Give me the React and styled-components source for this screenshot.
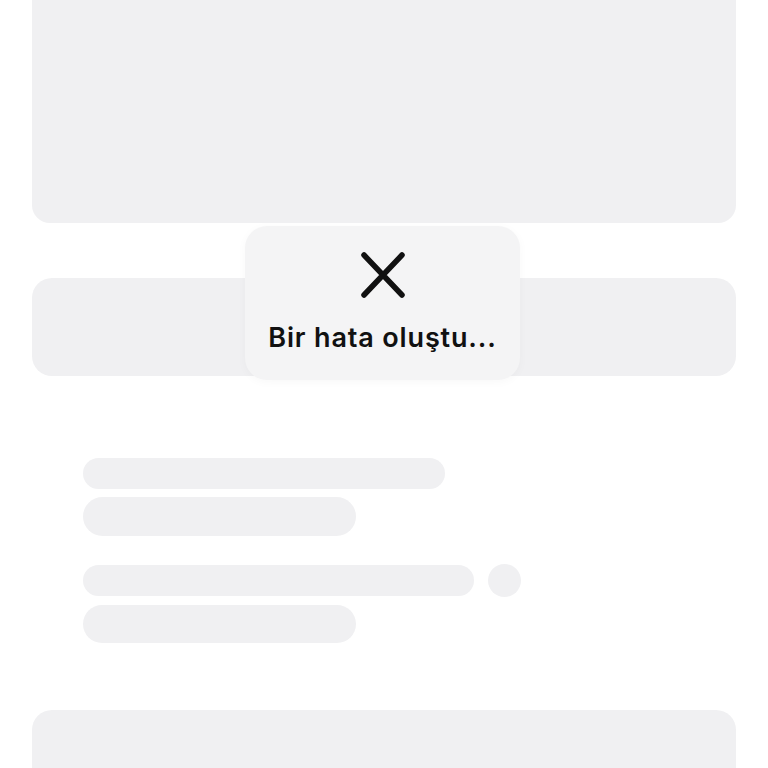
import React from 'react';
import styled, { createGlobalStyle } from 'styled-components';

const GlobalStyle = createGlobalStyle`
  html, body {
    margin: 0;
    padding: 0;
    background: #ffffff;
    font-family: Inter, "Noto Sans", "Liberation Sans", sans-serif;
    overflow: hidden;
  }
`;

const Page = styled.div`
  position: relative;
  width: 768px;
  height: 768px;
  overflow: hidden;
  padding: 0 32px;
  box-sizing: border-box;
  display: flex;
  flex-direction: column;
`;

const Card = styled.div`
  flex-shrink: 0;
  background: #f0f0f2;
  border-radius: ${(p) => p.$radius || 20}px;
  height: ${(p) => p.$height}px;
  margin-top: ${(p) => p.$offset || 0}px;
`;

const SkeletonGroup = styled.div`
  display: flex;
  flex-direction: column;
  gap: 8px;
  padding: 0 51px;
  margin-top: ${(p) => p.$offset}px;
`;

const Row = styled.div`
  display: flex;
  align-items: center;
  gap: 14px;
`;

const Bar = styled.div`
  background: #f0f0f2;
  border-radius: 999px;
  width: ${(p) => p.$width}px;
  height: ${(p) => p.$height}px;
`;

const Dot = styled.div`
  background: #f0f0f2;
  border-radius: 50%;
  width: 33px;
  height: 33px;
`;

const Toast = styled.div`
  position: absolute;
  left: 245px;
  top: 226px;
  width: 275px;
  height: 154px;
  box-sizing: border-box;
  background: #f4f4f5;
  border-radius: 22px;
  box-shadow: 0 2px 10px rgba(0, 0, 0, 0.03);
  display: flex;
  flex-direction: column;
  align-items: center;
  padding-top: 25px;
  gap: 23px;
`;

const Message = styled.div`
  font-size: 27px;
  font-weight: 600;
  color: #111111;
  letter-spacing: 0.85px;
  line-height: 32px;
`;

const App = () => (
  <>
    <GlobalStyle />
    <Page>
      <Card $height={243} $offset={-20} $radius={18} />
      <Card $height={98} $offset={55} />
      <SkeletonGroup $offset={82}>
        <Bar $width={362} $height={31} />
        <Bar $width={273} $height={39} />
      </SkeletonGroup>
      <SkeletonGroup $offset={28}>
        <Row>
          <Bar $width={391} $height={31} />
          <Dot />
        </Row>
        <Bar $width={273} $height={38} />
      </SkeletonGroup>
      <Card $height={120} $offset={67} />
      <Toast>
        <svg width="46" height="48" viewBox="0 0 46 48" fill="none">
          <path d="M4 4 L42 44 M42 4 L4 44" stroke="#111" strokeWidth="5.5" strokeLinecap="round" />
        </svg>
        <Message>Bir hata oluştu...</Message>
      </Toast>
    </Page>
  </>
);

export default App;
